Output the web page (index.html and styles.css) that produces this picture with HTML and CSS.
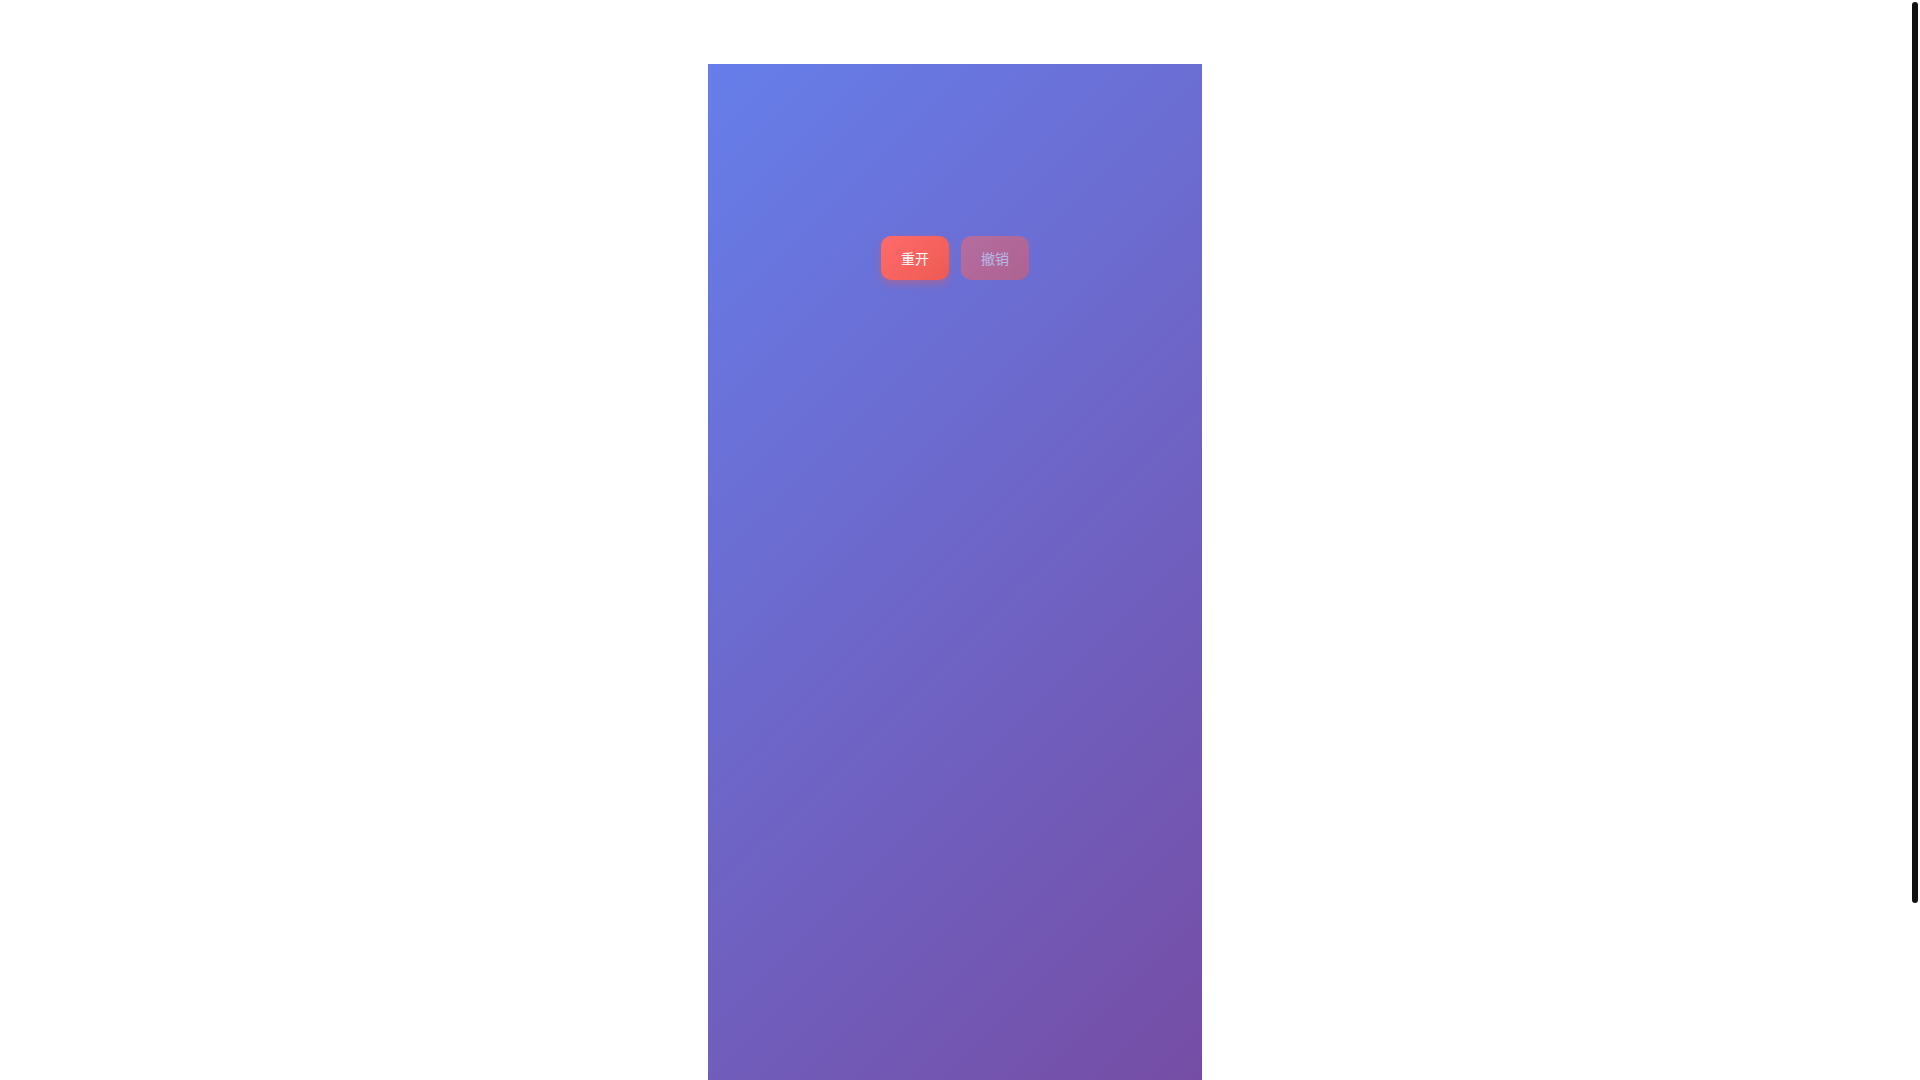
FILE: index.html
```html
<!DOCTYPE html>
<html lang="zh-CN">
<head>
<meta charset="utf-8">
<title>游戏</title>
<link rel="stylesheet" href="styles.css">
</head>
<body>
<div class="page">
  <main class="panel">
    <div class="controls">
      <button class="btn btn-restart">重开</button>
      <button class="btn btn-undo" disabled>撤销</button>
    </div>
  </main>
</div>
<div class="fake-scrollbar" aria-hidden="true"><div class="fake-thumb"></div></div>
</body>
</html>
```
FILE: styles.css
```css
html, body {
  margin: 0;
  padding: 0;
  background: #ffffff;
}
html {
  scrollbar-width: none;
}
::-webkit-scrollbar {
  width: 0;
  height: 0;
}
body {
  font-family: "Noto Sans CJK SC", "Noto Sans", sans-serif;
}
.page {
  display: flex;
  justify-content: center;
  padding: 64px 10px 148px 0;
}
.panel {
  width: 494px;
  height: 1080px;
  background: linear-gradient(135deg, #667eea 0%, #764ba2 100%);
  box-sizing: border-box;
  padding-top: 172px;
}
.controls {
  display: flex;
  justify-content: center;
  gap: 12px;
}
.btn {
  font-family: "Noto Sans CJK SC", "Noto Sans", sans-serif;
  font-size: 14px;
  line-height: 20px;
  padding: 12px 20px;
  border: none;
  border-radius: 10px;
  color: #ffffff;
  background: linear-gradient(135deg, #ff6b6b 0%, #ee5a52 100%);
  box-shadow: 0 4px 8px rgba(238, 90, 82, 0.4);
  cursor: pointer;
}
.btn-undo {
  opacity: 0.5;
  box-shadow: none;
  cursor: default;
}
.fake-scrollbar {
  position: fixed;
  top: 0;
  right: 0;
  width: 8px;
  height: 100vh;
  background: #ffffff;
}
.fake-thumb {
  margin-top: 2px;
  width: 6px;
  height: 901px;
  border-radius: 3px;
  background: #111111;
}
```
